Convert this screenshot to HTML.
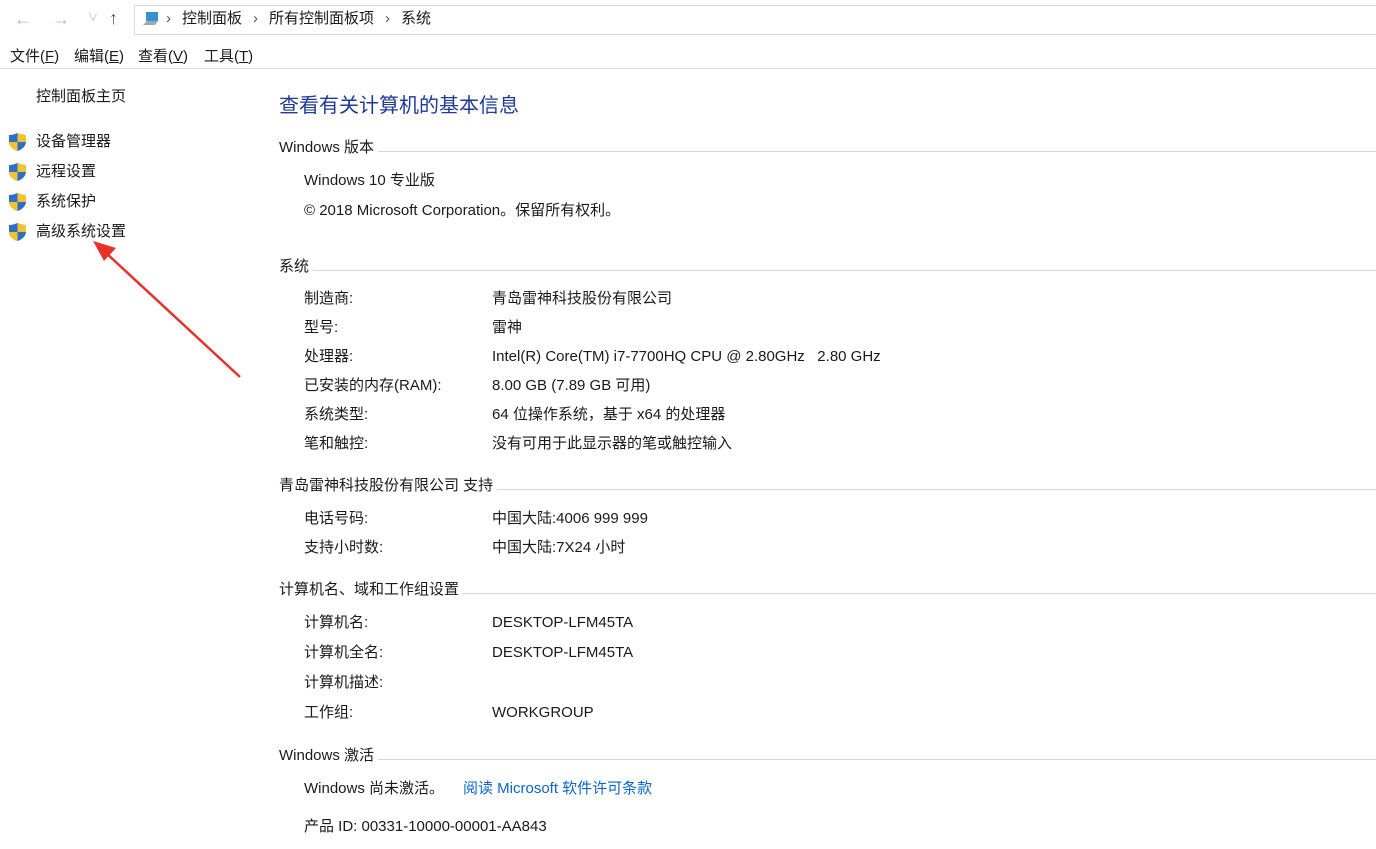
<!DOCTYPE html>
<html><head><meta charset="utf-8"><style>
body{margin:0;width:1376px;height:849px;background:#fff;position:relative;overflow:hidden;font-family:"Liberation Sans","Noto Sans CJK SC",sans-serif;font-size:15px;color:#1a1a1a}
.t{position:absolute;line-height:20px;white-space:nowrap}
.h{position:absolute;left:279px;right:0;height:20px;line-height:20px;display:flex;align-items:center}
.h span{white-space:nowrap;padding-right:4px}
.h i{flex:1;height:1px;background:#d5d5d5;margin-top:6px}
.sh{position:absolute;left:8px;width:19px;height:20px}
</style></head><body>
<div class="t" style="left:14px;top:9px;color:#b8b8b8;font-size:18px">←</div>
<div class="t" style="left:52px;top:9px;color:#b8b8b8;font-size:18px">→</div>
<div class="t" style="left:88px;top:9px;color:#b8b8b8;font-size:10px">∨</div>
<div class="t" style="left:109px;top:8px;color:#555;font-size:18px">↑</div>
<div style="position:absolute;left:134px;top:5px;right:-2px;height:28px;border:1px solid #d9d9d9"></div>
<svg style="position:absolute;left:142px;top:11px" width="18" height="16"><rect x="4" y="1" width="12" height="9" fill="#3a8fd6"/><path d="M1 14 L5 10 H16 L13 14Z" fill="#9aa"/></svg>
<div class="t" style="left:166px;top:9px;color:#555">›</div>
<div class="t" style="left:182px;top:9px">控制面板</div>
<div class="t" style="left:253px;top:9px;color:#555">›</div>
<div class="t" style="left:269px;top:9px">所有控制面板项</div>
<div class="t" style="left:385px;top:9px;color:#555">›</div>
<div class="t" style="left:401px;top:9px">系统</div>
<div class="t" style="left:10px;top:47px">文件(<u>F</u>)</div>
<div class="t" style="left:74px;top:47px">编辑(<u>E</u>)</div>
<div class="t" style="left:138px;top:47px">查看(<u>V</u>)</div>
<div class="t" style="left:204px;top:47px">工具(<u>T</u>)</div>
<div style="position:absolute;left:0;right:0;top:68px;height:1px;background:#e0e0e0"></div>
<div class="t" style="left:36px;top:87px">控制面板主页</div>
<svg width="0" height="0"><defs><g id="s"><path d="M9.5 1 Q5 3 1 3 V9 Q1 16 9.5 19 Q18 16 18 9 V3 Q14 3 9.5 1Z" fill="#2d6fc4"/><path d="M9.5 1 Q14 3 18 3 V10 H9.5Z" fill="#f2c232"/><path d="M1 10 H9.5 V19 Q1 16 1 10Z" fill="#f2c232"/></g></defs></svg>
<svg class="sh" style="top:132px"><use href="#s"/></svg>
<svg class="sh" style="top:162px"><use href="#s"/></svg>
<svg class="sh" style="top:192px"><use href="#s"/></svg>
<svg class="sh" style="top:222px"><use href="#s"/></svg>
<div class="t" style="left:36px;top:132px">设备管理器</div>
<div class="t" style="left:36px;top:162px">远程设置</div>
<div class="t" style="left:36px;top:192px">系统保护</div>
<div class="t" style="left:36px;top:222px">高级系统设置</div>
<svg style="position:absolute;left:0;top:0" width="260" height="400"><line x1="240" y1="377" x2="105" y2="252" stroke="#e8312a" stroke-width="2.5"/><path d="M93 241 L116 248 L104 261Z" fill="#e8312a"/></svg>
<div class="t" style="left:279px;top:93px;font-size:20px;line-height:26px;color:#1e3a9a">查看有关计算机的基本信息</div>
<div class="h" style="top:138px"><span>Windows 版本</span><i></i></div>
<div class="t" style="left:304px;top:171px">Windows 10 专业版</div>
<div class="t" style="left:304px;top:201px">© 2018 Microsoft Corporation。保留所有权利。</div>
<div class="h" style="top:257px"><span>系统</span><i></i></div>
<div class="t" style="left:304px;top:289px">制造商:</div><div class="t" style="left:492px;top:289px">青岛雷神科技股份有限公司</div>
<div class="t" style="left:304px;top:318px">型号:</div><div class="t" style="left:492px;top:318px">雷神</div>
<div class="t" style="left:304px;top:347px">处理器:</div><div class="t" style="left:492px;top:347px">Intel(R) Core(TM) i7-7700HQ CPU @ 2.80GHz &nbsp;&nbsp;2.80 GHz</div>
<div class="t" style="left:304px;top:376px">已安装的内存(RAM):</div><div class="t" style="left:492px;top:376px">8.00 GB (7.89 GB 可用)</div>
<div class="t" style="left:304px;top:405px">系统类型:</div><div class="t" style="left:492px;top:405px">64 位操作系统，基于 x64 的处理器</div>
<div class="t" style="left:304px;top:434px">笔和触控:</div><div class="t" style="left:492px;top:434px">没有可用于此显示器的笔或触控输入</div>
<div class="h" style="top:476px"><span>青岛雷神科技股份有限公司 支持</span><i></i></div>
<div class="t" style="left:304px;top:509px">电话号码:</div><div class="t" style="left:492px;top:509px">中国大陆:4006 999 999</div>
<div class="t" style="left:304px;top:538px">支持小时数:</div><div class="t" style="left:492px;top:538px">中国大陆:7X24 小时</div>
<div class="h" style="top:580px"><span>计算机名、域和工作组设置</span><i></i></div>
<div class="t" style="left:304px;top:613px">计算机名:</div><div class="t" style="left:492px;top:613px">DESKTOP-LFM45TA</div>
<div class="t" style="left:304px;top:643px">计算机全名:</div><div class="t" style="left:492px;top:643px">DESKTOP-LFM45TA</div>
<div class="t" style="left:304px;top:673px">计算机描述:</div>
<div class="t" style="left:304px;top:703px">工作组:</div><div class="t" style="left:492px;top:703px">WORKGROUP</div>
<div class="h" style="top:746px"><span>Windows 激活</span><i></i></div>
<div class="t" style="left:304px;top:779px">Windows 尚未激活。</div>
<div class="t" style="left:463px;top:779px;color:#0b66c8">阅读 Microsoft 软件许可条款</div>
<div class="t" style="left:304px;top:817px">产品 ID: 00331-10000-00001-AA843</div>
</body></html>
